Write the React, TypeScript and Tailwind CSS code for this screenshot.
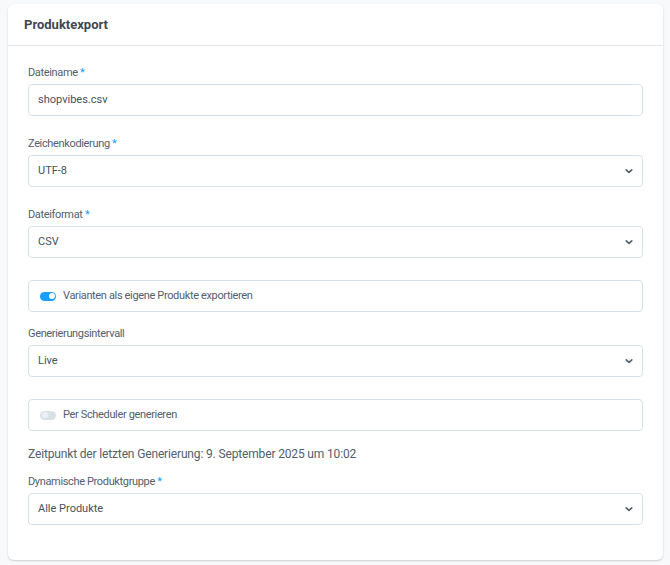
import React from "react";

const Chevron = () => (
  <svg width="10" height="10" viewBox="0 0 10 10" className="text-[#52606d]">
    <path d="M2.2 3.8 L5 6.4 L7.8 3.8" fill="none" stroke="currentColor" strokeWidth="1.6" strokeLinecap="round" strokeLinejoin="round" />
  </svg>
);

const Label = ({ text, required }: { text: string; required?: boolean }) => (
  <div className="text-[11px] leading-[18px] tracking-[-0.35px] text-[#52606d] mb-[2px]">
    {text}
    {required && <span className="text-[#189eff]"> *</span>}
  </div>
);

const Input = ({ value, select }: { value: string; select?: boolean }) => (
  <div className="h-8 border border-[#d9e1e8] rounded-[4px] bg-white flex items-center justify-between pl-[9px] pr-[8px] text-[11px] text-[#46525e]">
    <span>{value}</span>
    {select && <Chevron />}
  </div>
);

const Toggle = ({ on, text }: { on: boolean; text: string }) => (
  <div className="h-8 border border-[#d9e1e8] rounded-[4px] bg-white flex items-center pl-[11px] text-[11px] tracking-[-0.35px] text-[#52606d]">
    {on ? (
      <div className="w-4 h-[9px] rounded-full bg-[#189eff] flex items-center justify-end pr-[1.5px]">
        <div className="w-[6px] h-[6px] rounded-full bg-white" />
      </div>
    ) : (
      <div className="w-4 h-[9px] rounded-full bg-[#d9e1e8] flex items-center justify-start pl-[1.5px]">
        <div className="w-[6px] h-[6px] rounded-full bg-[#eef1f4]" />
      </div>
    )}
    <span className="ml-[7px]">{text}</span>
  </div>
);

export default function App() {
  return (
    <div className="w-[670px] h-[565px] bg-[#f7f9fa] pt-1 pl-2 pr-[7px]" style={{ fontFamily: "Roboto, 'Noto Sans', sans-serif" }}>
      <div className="bg-white rounded-md shadow-[0_1px_2px_rgba(0,0,0,0.18)] h-[556px]">
        <div className="h-[42px] border-b border-[#e3e8ee] flex items-center px-4">
          <h2 className="text-[13px] font-bold text-[#3d4852]">Produktexport</h2>
        </div>
        <div className="px-5 pt-[18px]">
          <div className="mb-[19px]">
            <Label text="Dateiname" required />
            <Input value="shopvibes.csv" />
          </div>
          <div className="mb-[19px]">
            <Label text="Zeichenkodierung" required />
            <Input value="UTF-8" select />
          </div>
          <div className="mb-[22px]">
            <Label text="Dateiformat" required />
            <Input value="CSV" select />
          </div>
          <div className="mb-[13px]">
            <Toggle on text="Varianten als eigene Produkte exportieren" />
          </div>
          <div className="mb-[22px]">
            <Label text="Generierungsintervall" />
            <Input value="Live" select />
          </div>
          <div className="mb-[13px]">
            <Toggle on={false} text="Per Scheduler generieren" />
          </div>
          <div className="text-[12px] leading-5 tracking-[-0.15px] text-[#52606d] mb-[9px]">
            Zeitpunkt der letzten Generierung: 9. September 2025 um 10:02
          </div>
          <div>
            <Label text="Dynamische Produktgruppe" required />
            <Input value="Alle Produkte" select />
          </div>
        </div>
      </div>
    </div>
  );
}
